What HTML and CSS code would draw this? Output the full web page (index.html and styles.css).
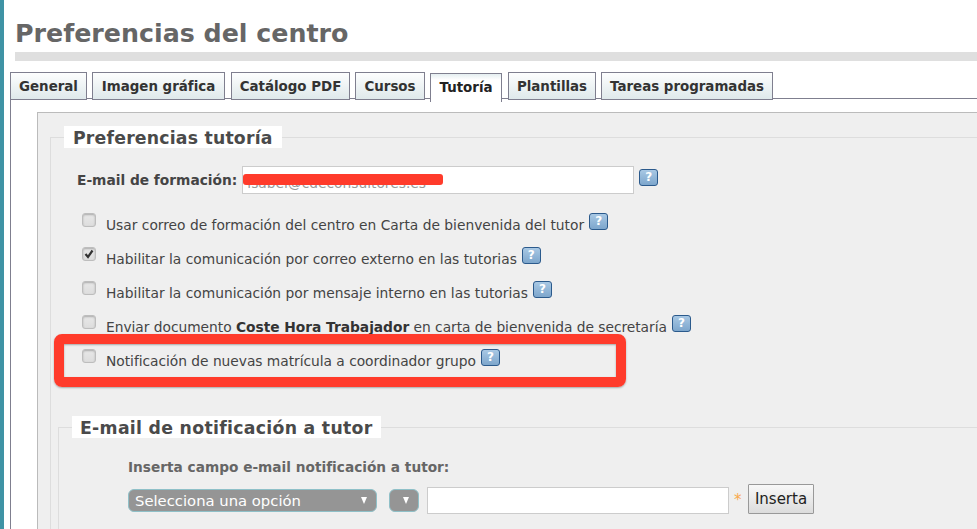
FILE: index.html
```html
<!DOCTYPE html>
<html lang="es">
<head>
<meta charset="utf-8">
<title>Preferencias del centro</title>
<link rel="stylesheet" href="styles.css">
</head>
<body>
<main class="page">
  <h1 class="title">Preferencias del centro</h1>
  <nav class="tabs">
    <a class="tab t-general">General</a>
    <a class="tab t-imagen">Imagen gráfica</a>
    <a class="tab t-catalogo">Catálogo PDF</a>
    <a class="tab t-cursos">Cursos</a>
    <a class="tab t-tutoria active">Tutoría</a>
    <a class="tab t-plantillas">Plantillas</a>
    <a class="tab t-tareas">Tareas programadas</a>
  </nav>
  <section class="panel">
    <div class="box">
      <fieldset class="group first">
        <legend>Preferencias tutoría</legend>
        <div class="email-row">
          <label class="email-label">E-mail de formación:</label>
          <span class="text-input wide">isabel@cdeconsultores.es</span>
          <span class="help">?</span>
        </div>
        <div class="check-row"><span class="check"></span><span class="check-text">Usar correo de formación del centro en Carta de bienvenida del tutor</span><span class="help">?</span></div>
        <div class="check-row"><span class="check on"><svg viewBox="0 0 14 14" width="14" height="14"><path d="M3.5 7 L6 10 L10.5 3.5" fill="none" stroke="#333" stroke-width="2.2"/></svg></span><span class="check-text">Habilitar la comunicación por correo externo en las tutorias</span><span class="help">?</span></div>
        <div class="check-row"><span class="check"></span><span class="check-text">Habilitar la comunicación por mensaje interno en las tutorias</span><span class="help">?</span></div>
        <div class="check-row"><span class="check"></span><span class="check-text tight">Enviar documento <b>Coste Hora Trabajador</b> en carta de bienvenida de secretaría</span><span class="help">?</span></div>
        <div class="check-row"><span class="check"></span><span class="check-text tight">Notificación de nuevas matrícula a coordinador grupo</span><span class="help">?</span></div>
        <fieldset class="group second">
          <legend>E-mail de notificación a tutor</legend>
          <p class="field-label">Inserta campo e-mail notificación a tutor:</p>
          <div class="insert-row">
            <span class="select big">Selecciona una opción<i class="arrow"></i></span>
            <span class="select small"><i class="arrow"></i></span>
            <span class="text-input mid"></span>
            <span class="req">*</span>
            <button class="btn" type="button">Inserta</button>
          </div>
        </fieldset>
      </fieldset>
    </div>
  </section>
  <div class="scribble"></div>
  <div class="highlight"></div>
</main>
</body>
</html>
```
FILE: styles.css
```css
* { box-sizing: border-box; }
html, body { margin: 0; height: 529px; overflow: hidden; background: #fff; }
body { font-family: "DejaVu Sans", Verdana, sans-serif; color: #444; }
.page { position: relative; height: 529px; border-left: 4px solid #3f93a5; padding: 15px 0 0 6px; overflow: hidden; }
.title { margin: 0 0 0 5px; border-bottom: 9px solid #dfdfdf; height: 46px; font-size: 25.3px; line-height: 38px; font-weight: 700; color: #666; }
.tabs { display: flex; gap: 5px; margin-top: 11px; height: 26px; align-items: flex-start; position: relative; z-index: 1; }
.tab { display: block; height: 28px; border: 1px solid #7f7f8f; padding: 0; text-align: center; font-size: 13.4px; line-height: 27px; font-weight: 700; color: #333; background: linear-gradient(#fdfefe, #dfe9eb); white-space: nowrap; }
.t-general { width: 77px; }
.t-imagen { width: 133px; margin-right: 1px; }
.t-catalogo { width: 119px; }
.t-cursos { width: 70px; }
.t-tutoria { width: 72px; margin-right: 1px; }
.t-plantillas { width: 88px; }
.t-tareas { width: 172px; }
.tab.active { height: 29px; margin-top: 1px; background: linear-gradient(#e4eef0 0, #fff 6px); border-bottom: 0; color: #222; }
.panel { border-top: 1px solid #7f7f8f; border-left: 1px solid #7f7f8f; padding: 13px 0 0 26px; height: 440px; }
.box { border: 1px solid #bbb; border-right: 0; background: #efefef; height: 440px; padding: 13px 0 0 12px; margin-right: -2px; }
.group { border: 1px solid #ddd; border-right: 0; margin: 0; padding: 0; min-width: 0; }
.group legend { background: #fff; color: #4a4a4a; font-weight: 700; font-size: 17.3px; line-height: 24px; height: 22px; padding: 0 9px; letter-spacing: .2px; margin-left: 13px; }
.first { height: 500px; padding-top: 18px; }
.second { margin: 38px 0 0 7px; height: 200px; }
.second legend { padding: 0 8px; letter-spacing: .3px; }
.email-row { display: flex; align-items: center; padding-left: 26px; height: 27px; gap: 5px; }
.email-label { font-size: 13.75px; font-weight: 700; color: #444; white-space: nowrap; }
.text-input { display: block; background: #fff; border: 1px solid #ccc; font-size: 13.8px; color: #999; }
.wide { width: 392px; height: 28px; line-height: 33px; padding-left: 4px; overflow: hidden; }
.help { display: block; flex: none; width: 19px; height: 17px; border: 1px solid #2b5a8c; border-radius: 3px; background: linear-gradient(#a8c8e4, #7da6cc); color: #fff; font-size: 12px; font-weight: 700; line-height: 15px; text-align: center; }
.email-row .help { margin-top: -4px; }
.check-row { display: flex; align-items: center; height: 34px; padding-left: 31px; font-size: 13.8px; white-space: nowrap; }
.email-row + .check-row { margin-top: 15px; }
.check { display: block; flex: none; width: 14px; height: 14px; border: 1px solid #bdbdbd; border-radius: 3px; background: linear-gradient(#e8e8e8, #ddd); box-shadow: inset 0 1px 2px #aaa; margin: -10px 10px 0 0; overflow: hidden; }
.check.on svg { display: block; margin: -1px; }
.check-text { color: #444; margin-right: 5px; }
.check-text.tight { letter-spacing: -.03px; }
.check-row:nth-of-type(n) .check-text b { color: #333; }
.check-row .help { margin-top: -7px; }
.field-label { margin: 20px 0 0 69px; font-size: 13.7px; line-height: 18px; font-weight: 700; color: #666; }
.insert-row { display: flex; align-items: center; margin: 9px 0 0 69px; height: 30px; }
.select { display: block; position: relative; height: 23px; background: #959595; border: 1px solid #8fc0c8; border-radius: 6px; color: #fff; font-size: 14.8px; line-height: 22px; padding-left: 6px; white-space: nowrap; }
.big { width: 249px; }
.small { width: 30px; margin-left: 12px; }
.arrow { position: absolute; right: 9px; top: 7px; width: 0; height: 0; border-left: 3.5px solid transparent; border-right: 3.5px solid transparent; border-top: 7px solid #fff; }
.mid { width: 302px; height: 27px; margin-left: 8px; }
.req { color: #f9a94c; font-size: 15px; margin-left: 5px; width: 14px; }
.btn { width: 66px; height: 30px; margin: -2px 0 0; padding: 0; border: 1px solid #999; border-radius: 1px; background: linear-gradient(#f8f8f8, #dcdcdc); color: #222; font-family: "DejaVu Sans", Verdana, sans-serif; font-size: 15px; }
.scribble { position: absolute; left: 239px; top: 174px; width: 200px; height: 11px; background: #ff3b2b; border-radius: 3px; }
.highlight { position: absolute; left: 50px; top: 334px; width: 572px; height: 53px; border: 10px solid #ff3b2b; border-radius: 8px; box-shadow: 0 1px 2px rgba(0,0,0,.3), inset 0 1px 2px rgba(0,0,0,.3); }
```
